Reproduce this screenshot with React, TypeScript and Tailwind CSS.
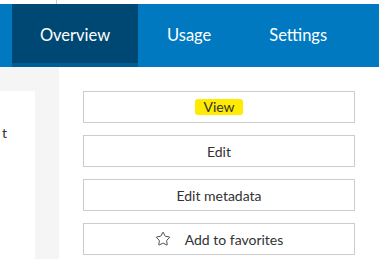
import { Star } from 'lucide-react'

const tabs = ['Overview', 'Usage', 'Settings']

function ActionButton({ children }: { children: React.ReactNode }) {
  return (
    <button className="flex h-[32px] w-[272px] items-center justify-center gap-[14px] border border-[#cccccc] bg-white text-[14px] text-[#323232]">
      {children}
    </button>
  )
}

export default function App() {
  return (
    <div className="h-[259px] w-[379px] overflow-hidden bg-white font-['Lato',sans-serif]">
      {/* top strip */}
      <div className="h-[4px] bg-white">
        <div className="ml-[56px] h-full w-px bg-[#cccccc]" />
      </div>

      {/* tab bar */}
      <nav className="flex h-[63px] bg-[#0079c1] pl-[12px]">
        {tabs.map((tab, i) => (
          <div
            key={tab}
            className={`flex items-center text-[16.5px] text-white ${
              i === 0
                ? 'w-[126px] justify-center border-b-4 border-[#005e95] bg-[#004874] pt-[4px]'
                : 'px-[29px]'
            }`}
          >
            {tab}
          </div>
        ))}
      </nav>

      <div className="flex h-[192px]">
        {/* left column */}
        <div className="w-[59px] bg-[#f5f5f5] pt-[24px]">
          <div className="h-full w-[35px] bg-white pt-[31px] text-[14px]">
            <span className="pl-[2px] text-[#323232]">t</span>
          </div>
        </div>

        {/* actions */}
        <div className="flex flex-col gap-[12px] pl-[24px] pt-[24px]">
          <ActionButton>
            <span className="rounded-[3px] bg-[#ffeb00] px-[8px] leading-[16px]">View</span>
          </ActionButton>
          <ActionButton>Edit</ActionButton>
          <ActionButton>Edit metadata</ActionButton>
          <ActionButton>
            <Star className="h-[16px] w-[16px]" strokeWidth={1.3} />
            <span>Add to favorites</span>
          </ActionButton>
        </div>
      </div>
    </div>
  )
}
